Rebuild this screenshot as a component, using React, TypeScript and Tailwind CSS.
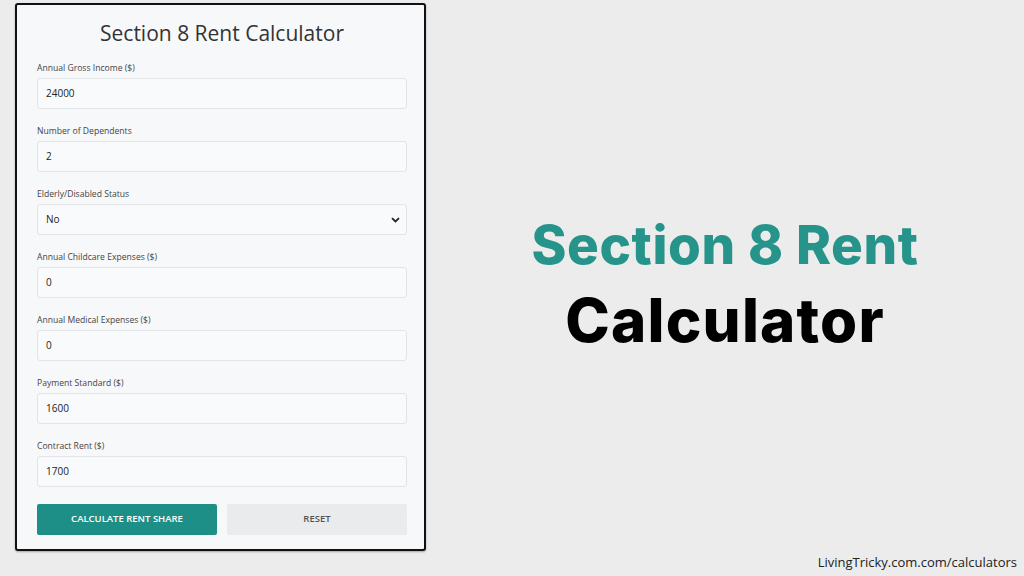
const fields = [
  { label: "Annual Gross Income ($)", value: "24000" },
  { label: "Number of Dependents", value: "2" },
  { label: "Elderly/Disabled Status", value: "No", select: true },
  { label: "Annual Childcare Expenses ($)", value: "0" },
  { label: "Annual Medical Expenses ($)", value: "0" },
  { label: "Payment Standard ($)", value: "1600" },
  { label: "Contract Rent ($)", value: "1700" },
];

export default function App() {
  return (
    <div className="flex h-[576px] w-full bg-[#ececec] font-['Open_Sans',sans-serif]">
      <div className="pl-[15px] pt-[3px]">
        <div className="flex h-[548px] w-[411px] flex-col rounded-[3px] border-2 border-[#111] bg-[#f7f8fa] pl-[20px] pr-[17px] pt-[13px] shadow-[0_1px_2px_rgba(0,0,0,0.3)]">
          <h1 className="text-center text-[21px] leading-[30px] font-medium text-[#333]">
            Section 8 Rent Calculator
          </h1>
          <div className="mt-[14px] flex flex-col gap-[16px]">
            {fields.map((f) => (
              <div key={f.label} className="flex flex-col">
                <label className="text-[8.6px] leading-[12px] text-[#444]">{f.label}</label>
                <div className="mt-[4px] flex h-[31px] items-center justify-between rounded-[3px] border border-[#e2e4e8] bg-[#f9fafb] px-[8px] text-[10px] text-[#222]">
                  <span>{f.value}</span>
                  {f.select && (
                    <svg width="9" height="6" viewBox="0 0 9 6" className="mr-[-2px]">
                      <path d="M1 1.2 L4.5 4.5 L8 1.2" fill="none" stroke="#222" strokeWidth="1.8" />
                    </svg>
                  )}
                </div>
              </div>
            ))}
          </div>
          <div className="mt-[17px] flex gap-[10px]">
            <button className="flex h-[31px] flex-1 items-center justify-center rounded-[2px] bg-[#1e8f87] text-[9.5px] font-semibold text-white">
              CALCULATE RENT SHARE
            </button>
            <button className="flex h-[31px] flex-1 items-center justify-center rounded-[2px] bg-[#e9ebec] text-[9.5px] font-semibold text-[#555]">
              RESET
            </button>
          </div>
        </div>
      </div>
      <div className="flex flex-1 flex-col">
        <div className="flex flex-1 flex-col items-center justify-center pt-[18px] font-['Inter',sans-serif]">
          <div className="text-[53px] leading-[70px] font-extrabold tracking-[0.6px] text-[#26948a]">
            Section 8 Rent
          </div>
          <div className="text-[60px] leading-[80px] font-extrabold tracking-[1.2px] text-black">
            Calculator
          </div>
        </div>
        <div className="pb-[4px] pr-[7px] text-right text-[13px] text-[#222]">
          LivingTricky.com.com/calculators
        </div>
      </div>
    </div>
  );
}
